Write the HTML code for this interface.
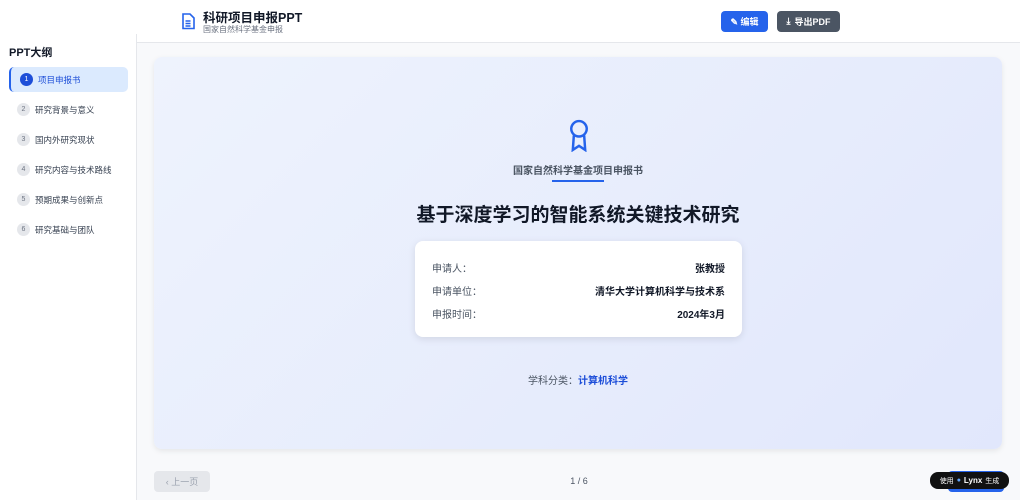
<!DOCTYPE html>
<html><head><meta charset="utf-8"><style>
*{margin:0;padding:0;box-sizing:border-box}
body{width:1020px;height:500px;overflow:hidden;background:#f8f9fb;font-family:"Liberation Sans","Noto Sans CJK SC",sans-serif;position:relative;color:#1f2937}
.hdr{position:absolute;left:0;top:0;width:1020px;height:43px;background:#fff;border-bottom:1px solid #e5e7eb}
.side{position:absolute;left:0;top:34px;width:137px;height:466px;background:#fff;border-right:1px solid #e5e7eb}
.t1{position:absolute;left:203px;top:7px;font-size:12.5px;font-weight:bold;color:#111827}
.t2{position:absolute;left:203px;top:24px;font-size:8px;color:#6b7280}
.btn{position:absolute;top:11px;height:21px;border-radius:4px;color:#fff;font-size:9px;font-weight:bold;display:flex;align-items:center;justify-content:center;gap:4px}
.sh{position:absolute;left:9px;top:44px;font-size:11px;font-weight:bold;color:#111827}
.it{position:absolute;left:9px;width:119px;height:25px;display:flex;align-items:center;font-size:8.5px;color:#374151}
.it .n{width:13px;height:13px;border-radius:50%;background:#e5e7eb;color:#6b7280;font-size:7px;display:flex;align-items:center;justify-content:center;margin:0 5px 0 8px}
.card{position:absolute;left:154px;top:57px;width:848px;height:392px;border-radius:8px;background:linear-gradient(135deg,#eef3fd,#e1e7fc);box-shadow:0 2px 6px rgba(0,0,0,.08)}
.c{position:absolute;left:0;width:100%;text-align:center}
.info{position:absolute;left:415px;top:241px;width:327px;height:96px;background:#fff;border-radius:8px;box-shadow:0 2px 8px rgba(0,0,0,.1);font-size:10px}
.row{position:absolute;left:17px;right:17px;display:flex;justify-content:space-between}
.row b{color:#111827}
.row span{color:#4b5563}
</style></head><body>
<div class="hdr"></div>
<div class="side"></div>
<svg style="position:absolute;left:181px;top:13px" width="14" height="17" viewBox="0 0 14 17" fill="none" stroke="#2563eb" stroke-width="1.6"><path d="M2 1h7l4 4v10.5H2z"/><path d="M4.5 8h5M4.5 10.5h5M4.5 13h5"/></svg>
<div class="t1">科研项目申报PPT</div>
<div class="t2">国家自然科学基金申报</div>
<div class="btn" style="left:721px;width:47px;background:#2563eb">✎ 编辑</div>
<div class="btn" style="left:777px;width:63px;background:#4b5563"><span style="font-size:9px">⤓</span> 导出PDF</div>
<div class="sh">PPT大纲</div>
<div class="it" style="top:67px;background:#dbeafe;border-left:2px solid #2563eb;border-radius:5px;color:#1d4ed8"><span class="n" style="background:#1d4ed8;color:#fff;margin-left:9px">1</span>项目申报书</div>
<div class="it" style="top:97px"><span class="n">2</span>研究背景与意义</div>
<div class="it" style="top:127px"><span class="n">3</span>国内外研究现状</div>
<div class="it" style="top:157px"><span class="n">4</span>研究内容与技术路线</div>
<div class="it" style="top:187px"><span class="n">5</span>预期成果与创新点</div>
<div class="it" style="top:217px"><span class="n">6</span>研究基础与团队</div>
<div class="card">
<svg style="position:absolute;left:413px;top:62px" width="24" height="33" viewBox="0 0 22 32" fill="none" stroke="#2563eb" stroke-width="2.4"><circle cx="11" cy="9.5" r="7.5"/><path d="M6 16l-1 14 6-4 6 4-1-14"/></svg>
<div class="c" style="top:105px;font-size:10px;color:#4b5563;font-weight:bold">国家自然科学基金项目申报书</div>
<div style="position:absolute;left:398px;top:123px;width:52px;height:2px;background:#2563eb"></div>
<div class="c" style="top:143px;font-size:19px;font-weight:bold;color:#111827">基于深度学习的智能系统关键技术研究</div>
<div class="c" style="top:315px;font-size:10px;color:#4b5563">学科分类：<b style="color:#1d4ed8">计算机科学</b></div>
</div>
<div class="info">
<div class="row" style="top:19px"><span>申请人：</span><b>张教授</b></div>
<div class="row" style="top:42px"><span>申请单位：</span><b>清华大学计算机科学与技术系</b></div>
<div class="row" style="top:65px"><span>申报时间：</span><b>2024年3月</b></div>
</div>
<div style="position:absolute;left:154px;top:471px;width:56px;height:21px;background:#e5e7eb;border-radius:4px;color:#9ca3af;font-size:9px;display:flex;align-items:center;justify-content:center">‹ 上一页</div>
<div style="position:absolute;left:0;width:1158px;text-align:center;top:476px;font-size:9px;color:#4b5563">1 / 6</div>
<div style="position:absolute;left:948px;top:471px;width:56px;height:21px;background:#2563eb;border-radius:4px"></div>
<div style="position:absolute;left:930px;top:472px;width:79px;height:17px;background:#111;border-radius:8px;color:#fff;font-size:7px;display:flex;align-items:center;justify-content:center;gap:3px">使用 <span style="color:#60a5fa">●</span><b style="font-size:8px">Lynx</b> 生成</div>
</body></html>
